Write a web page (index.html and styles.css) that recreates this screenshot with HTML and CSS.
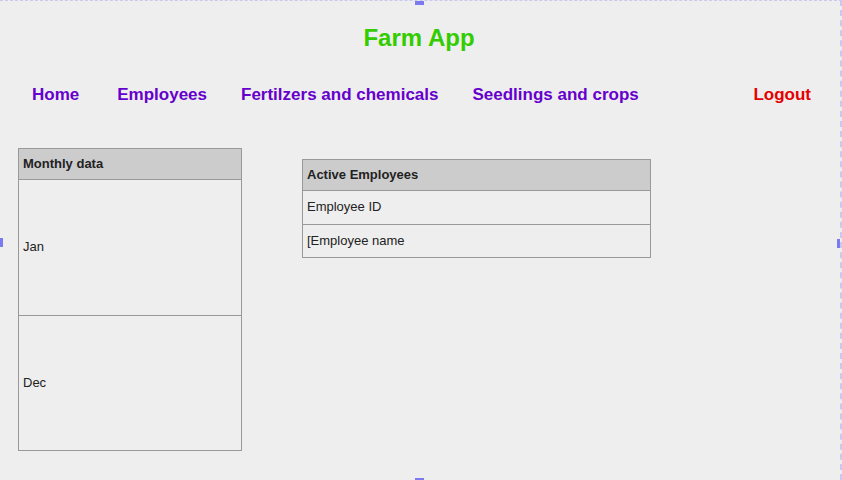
FILE: index.html
```html
<!DOCTYPE html>
<html>
<head>
<meta charset="utf-8">
<link rel="stylesheet" href="styles.css">
</head>
<body>
<div class="frame">
  <h1 class="title">Farm App</h1>
  <nav class="nav">
    <a class="nav-link home">Home</a>
    <a class="nav-link">Employees</a>
    <a class="nav-link">Fertilzers and chemicals</a>
    <a class="nav-link">Seedlings and crops</a>
    <a class="nav-link logout">Logout</a>
  </nav>
  <main class="content">
    <section class="panel monthly">
      <div class="panel-head">Monthly data</div>
      <div class="row tall">Jan</div>
      <div class="row tall last">Dec</div>
    </section>
    <section class="panel employees">
      <div class="panel-head">Active Employees</div>
      <div class="row short">Employee ID</div>
      <div class="row short2">[Employee name</div>
    </section>
  </main>
  <span class="handle h-top"></span>
  <span class="handle h-left"></span>
  <span class="handle h-right"></span>
  <span class="handle h-bottom"></span>
</div>
</body>
</html>
```

FILE: styles.css
```css
html, body {
  margin: 0;
  padding: 0;
  background: #eeeeee;
}
.frame {
  position: relative;
  width: 842px;
  height: 480px;
  box-sizing: border-box;
  border-top: 1px dashed #c9c9ef;
  border-right: 2px dashed #c9c9ef;
  font-family: "Liberation Sans", Arial, sans-serif;
  overflow: hidden;
}
.title {
  margin: 23px 0 0;
  padding-right: 2px;
  font-size: 24px;
  line-height: 28px;
  font-weight: bold;
  color: #33cc00;
  text-align: center;
}
.nav {
  display: flex;
  align-items: center;
  margin-top: 33px;
  padding: 0 29px 0 32px;
  gap: 34px;
}
.nav-link {
  font-size: 17px;
  line-height: 20px;
  font-weight: bold;
  color: #6600cc;
  text-decoration: none;
}
.home {
  margin-right: 4px;
}
.logout {
  margin-left: auto;
  color: #e60000;
}
.content {
  display: flex;
  align-items: flex-start;
  gap: 60px;
  margin-top: 43px;
  padding-left: 18px;
}
.panel {
  border: 1px solid #999999;
  box-sizing: border-box;
  color: #222222;
  font-size: 13px;
}
.monthly {
  width: 224px;
}
.employees {
  width: 349px;
  margin-top: 11px;
}
.panel-head {
  height: 30px;
  box-sizing: border-box;
  display: flex;
  align-items: center;
  padding: 0 0 2px 4px;
  background: #cccccc;
  font-weight: bold;
}
.row {
  display: flex;
  align-items: center;
  box-sizing: content-box;
  padding: 0 0 0 4px;
  border-top: 1px solid #999999;
}
.tall {
  height: 133px;
  padding-bottom: 2px;
}
.tall.last {
  height: 132px;
}
.short {
  height: 31px;
  padding-bottom: 2px;
}
.short2 {
  height: 30px;
  padding-bottom: 2px;
}
.handle {
  position: absolute;
  background: #7b7bef;
}
.h-top {
  left: 415px;
  top: -1px;
  width: 9px;
  height: 5px;
}
.h-bottom {
  left: 415px;
  bottom: 0;
  width: 9px;
  height: 2px;
}
.h-left {
  left: 0;
  top: 237px;
  width: 3px;
  height: 9px;
}
.h-right {
  right: -2px;
  top: 238px;
  width: 5px;
  height: 9px;
}
```
